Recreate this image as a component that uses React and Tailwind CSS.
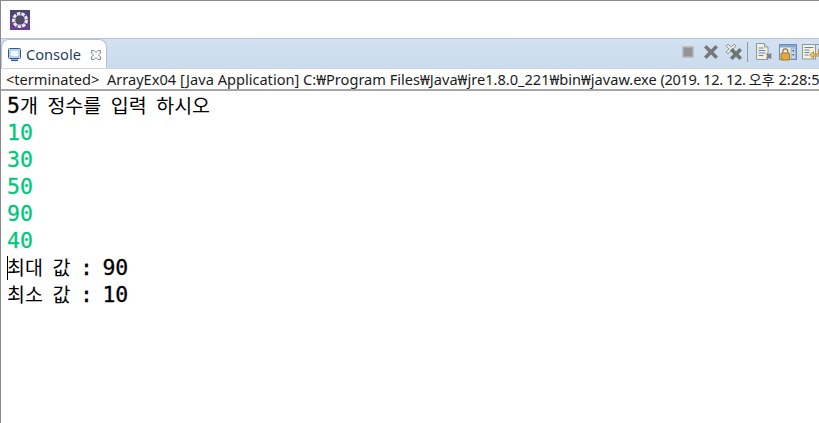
import React from 'react';

const mono = { fontFamily: '"DejaVu Sans Mono", "Noto Sans CJK KR", monospace' };

const GearLogo = () => (
  <svg width="20" height="20" viewBox="0 0 20 20" className="block">
    <defs>
      <linearGradient id="logoBg" x1="0" y1="0" x2="0" y2="1">
        <stop offset="0" stopColor="#46456e" />
        <stop offset="1" stopColor="#6b3f96" />
      </linearGradient>
    </defs>
    <rect width="20" height="20" fill="url(#logoBg)" />
    <circle cx="10" cy="10" r="6.400" fill="none" stroke="#ecebef" strokeWidth="3.200" strokeDasharray="3.300 1.100" />
    <circle cx="10" cy="10" r="5.200" fill="#4f4d63" stroke="#d9d8df" strokeWidth="0.800" />
  </svg>
);

const ConsoleIcon = () => (
  <svg width="16" height="16" viewBox="0 0 16 16" className="block">
    <rect x="1.500" y="1.500" width="12" height="10" rx="1" fill="#dfe9f5" stroke="#2f5f92" />
    <rect x="3" y="3" width="9" height="7" fill="#f4f8fc" stroke="#5d8ab8" strokeWidth="0.600" />
    <path d="M4 12.500h7v1.500H4z" fill="#2f5f92" />
  </svg>
);

const CloseTabIcon = () => (
  <svg width="12" height="12" viewBox="0 0 12 12" className="block">
    <path d="M1.500 1.500h2.500L6 3.500l2-2h2.500v2.500L8.500 6l2 2v2.500H8L6 8.500l-2 2H1.500V8l2-2-2-2z" fill="#f5f7f9" stroke="#7d8a93" />
  </svg>
);

const StopIcon = () => (
  <svg width="16" height="16" viewBox="0 0 16 16" className="block">
    <rect x="2.500" y="2.500" width="11" height="11" fill="#a9adb1" stroke="#bcc0c3" />
    <rect x="4" y="4" width="8" height="8" fill="#92969a" />
  </svg>
);

const GrayX = () => (
  <svg width="16" height="16" viewBox="0 0 16 16" className="block">
    <path d="M1 3.500 3.500 1 8 5.500 12.500 1 15 3.500 10.500 8l4.500 4.500-2.500 2.500L8 10.500 3.500 15 1 12.500 5.500 8z" fill="#75797c" />
  </svg>
);

const DoubleX = () => (
  <svg width="18" height="18" viewBox="0 0 18 18" className="block">
    <path d="M1 3 3 1l3 3 3-3 2 2-3 3 3 3-2 2-3-3-3 3-2-2 3-3z" fill="#e4e6e4" stroke="#85898a" strokeWidth="0.800" />
    <path d="M5 7.500 7.500 5 11 8.500 14.500 5 17 7.500 13.500 11l3.500 3.500-2.500 2.500L11 13.500 7.500 17 5 14.500 8.500 11z" fill="#6f7376" />
  </svg>
);

const PageIcon = () => (
  <svg width="20" height="18" viewBox="0 0 20 18" className="block">
    <path d="M1.500.5h8l3.500 3.500v12.500H1.500z" fill="#f4f2dc" stroke="#8d97a5" />
    <path d="M9.500.5V4H13" fill="#dfe4ec" stroke="#8d97a5" />
    <path d="M3.500 5h5M3.500 7.500h7M3.500 10h7M3.500 12.500h5" stroke="#5f86b5" />
    <path d="M11 11.500l1.500-1.500 1.500 1.500 1.500-1.500 1.500 1.500-1.500 1.500 1.500 1.500-1.500 1.500-1.500-1.500-1.500 1.500-1.500-1.500 1.500-1.500z" fill="#7a7e80" />
  </svg>
);

const PinIcon = () => (
  <svg width="20" height="18" viewBox="0 0 20 18" className="block">
    <rect x="1.500" y="1.500" width="17" height="15" fill="#eef3f9" stroke="#6d8db3" />
    <rect x="2" y="2" width="16" height="2.500" fill="#86a8d0" />
    <rect x="13" y="5" width="4.500" height="11" fill="#c8d8ea" stroke="#6d8db3" strokeWidth="0.600" />
    <rect x="14.500" y="7" width="1.500" height="1.500" fill="#345f8f" />
    <rect x="14.500" y="11" width="1.500" height="1.500" fill="#345f8f" />
    <path d="M4.800 10V8.300a2.500 2.500 0 0 1 5 0V10" fill="none" stroke="#9a7a38" strokeWidth="1.300" />
    <rect x="3" y="10" width="8.500" height="7" rx="0.500" fill="#e0ab3d" stroke="#a6762a" />
  </svg>
);

const SwitchIcon = () => (
  <svg width="20" height="18" viewBox="0 0 20 18" className="block">
    <rect x="1.500" y="1.500" width="13" height="14.500" fill="#f4f2dc" stroke="#8d97a5" />
    <path d="M3.500 4.500h9M3.500 7h5M3.500 9.500h5M3.500 12h4" stroke="#5f86b5" />
    <path d="M12 1.500h6.500v7" fill="none" stroke="#8d97a5" />
    <path d="M17.500 6v5h-5V8.500L8.500 12l4 3.500V13h7V6z" fill="#e9c25f" stroke="#a98431" strokeWidth="0.800" />
  </svg>
);

// Korean glyphs are thinner and narrower than the mono digits in the console font
const Ko = ({ children }) => (
  <span className="text-[19.500px] [word-spacing:-2.200px] [-webkit-text-stroke:0px]">{children}</span>
);

const ConsoleLine = ({ className = '', children }) => (
  <div className={`h-[27px] leading-[27px] whitespace-pre ${className}`}>{children}</div>
);

export default function App() {
  return (
    <div className="w-[819px] h-[423px] overflow-hidden bg-white border-t border-l border-[#8a8a8a] flex flex-col" style={{ fontFamily: '"Noto Sans", "Noto Sans CJK KR", sans-serif' }}>
      <div className="h-[37px] flex items-center pl-[9px] shrink-0">
        <GearLogo />
      </div>

      <div className="h-[30px] shrink-0 flex justify-between overflow-hidden bg-gradient-to-b from-[#d3e1f0] to-[#cbdcee] border-t border-[#b9c6d6]">
        <div className="w-[106px] h-[30px] bg-white rounded-t-lg border border-b-0 border-[#b5c4d6] flex items-center pl-[5px] gap-[3px] text-[14.600px] text-[#1f3f5f]">
          <ConsoleIcon />
          <span>Console</span>
          <span className="ml-[6px]"><CloseTabIcon /></span>
        </div>
        <div className="flex items-center -mr-[2px] pb-[3px]">
          <StopIcon />
          <span className="ml-[7px]"><GrayX /></span>
          <span className="ml-[6px]"><DoubleX /></span>
          <span className="w-px h-[20px] bg-[#8d9aa8] ml-[4px] mr-[7px]" />
          <PageIcon />
          <span className="ml-[3px]"><PinIcon /></span>
          <span className="ml-[3px]"><SwitchIcon /></span>
        </div>
      </div>

      <div className="h-[23px] shrink-0 border-t border-[#d6d6d6] border-b-[2px] border-b-[#a6a6a6] pl-[5px] text-[14.600px] leading-[21px] text-[#1c1c1c] whitespace-pre overflow-hidden">
        {'<terminated>  ArrayEx04 [Java Application] C:₩Program Files₩Java₩jre1.8.0_221₩bin₩javaw.exe '}
        <span className="tracking-[-0.400px]">(2019. 12. 12. </span>
        <span className="text-[14px]">오후</span>{' 2:28:5'}
      </div>

      <div className="pl-[6px] pt-[1px] text-[21.500px] text-black [-webkit-text-stroke:0.300px]" style={mono}>
        <ConsoleLine>5<Ko>개 정수를 입력 하시오</Ko></ConsoleLine>
        <ConsoleLine className="text-[#00c87d]">10</ConsoleLine>
        <ConsoleLine className="text-[#00c87d]">30</ConsoleLine>
        <ConsoleLine className="text-[#00c87d]">50</ConsoleLine>
        <ConsoleLine className="text-[#00c87d]">90</ConsoleLine>
        <ConsoleLine className="text-[#00c87d]">40</ConsoleLine>
        <ConsoleLine>
          <span className="relative">
            <span className="absolute left-0 top-[1px] w-px h-[24px] bg-black" />
            <Ko>최대 값 </Ko>:<Ko> </Ko>90
          </span>
        </ConsoleLine>
        <ConsoleLine><Ko>최소 값 </Ko>:<Ko> </Ko>10</ConsoleLine>
      </div>
    </div>
  );
}
